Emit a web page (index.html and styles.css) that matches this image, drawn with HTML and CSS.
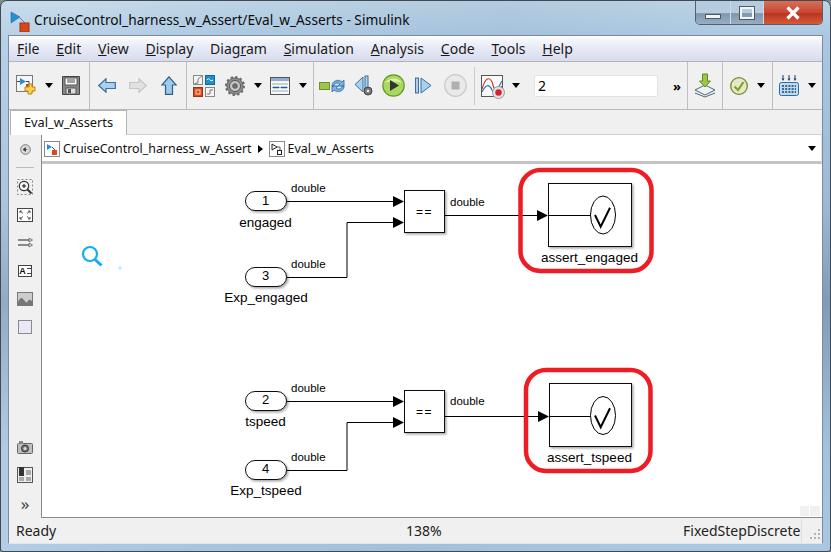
FILE: index.html
```html
<!DOCTYPE html>
<html lang="en">
<head>
<meta charset="utf-8">
<title>CruiseControl_harness_w_Assert/Eval_w_Asserts - Simulink</title>
<link rel="stylesheet" href="styles.css">
</head>
<body>
<div class="window">
  <header class="titlebar">
    <svg class="app-icon" width="22" height="24" viewBox="0 0 22 24"><path d="M1 4l9 5-9 6z" fill="#2a8fd0" stroke="#1a6aa8" stroke-width=".6"/><path d="M10 10l6 6" stroke="#777" fill="none"/><rect x="10" y="15" width="9" height="9" fill="#d8481e" stroke="#a03010"/></svg>
    <span class="title">CruiseControl_harness_w_Assert/Eval_w_Asserts - Simulink</span>
    <div class="caption">
      <span class="cap cap-min"><i class="min-glyph"></i></span>
      <span class="cap cap-max"><i class="max-glyph"></i></span>
      <span class="cap cap-close"><svg width="16" height="14" viewBox="0 0 16 14"><path d="M2.5 1.5l11 11M13.5 1.5l-11 11" stroke="#fff" stroke-width="3.2" fill="none"/></svg></span>
    </div>
  </header>
  <div class="frame">
    <nav class="menubar">
      <span><u>F</u>ile</span><span><u>E</u>dit</span><span><u>V</u>iew</span><span><u>D</u>isplay</span><span>Diag<u>r</u>am</span><span><u>S</u>imulation</span><span><u>A</u>nalysis</span><span><u>C</u>ode</span><span><u>T</u>ools</span><span><u>H</u>elp</span>
    </nav>
    <div class="toolbar">
      <div class="group g1">
        <svg class="t-new" width="21" height="21" viewBox="0 0 21 21"><rect x=".5" y=".5" width="16" height="16" fill="#f6f6f6" stroke="#777"/><path d="M4 3l6 3.5-6 3.5z" fill="#2a8fd0"/><path d="M1 6.500h3M10 6.500h3v3" stroke="#444" fill="none"/><rect x="10" y="9" width="3" height="3" fill="#d8481e"/><path d="M13 9h3v3h3v4h-3v3h-4v-3H9v-4h4z" fill="#f8d34a" stroke="#b68a18"/></svg>
        <i class="dd dd-new"></i>
        <svg class="t-save" width="18" height="19" viewBox="0 0 18 19"><path d="M.5.5h17v18H.5z" fill="#888" stroke="#444"/><rect x="3" y="2" width="12" height="7" fill="#fff" stroke="#555"/><path d="M5 4h8M5 6h8" stroke="#444"/><rect x="4" y="12" width="10" height="6" fill="#ddd" stroke="#555"/><rect x="6" y="13" width="3" height="4" fill="#555"/></svg>
      </div>
      <div class="group g2">
        <svg class="t-back" width="18" height="15" viewBox="0 0 18 15"><path d="M.7 7.500L8 .8v3.700h9.300v6H8v3.700z" fill="#a9d0ee" stroke="#3c6f9d" stroke-width="1.200"/></svg>
        <svg class="t-fwd" width="18" height="15" viewBox="0 0 18 15"><path d="M17.300 7.500L10 .8v3.700H.7v6H10v3.700z" fill="#e2e2e2" stroke="#c6c6c6" stroke-width="1.200"/></svg>
        <svg class="t-up" width="16" height="19" viewBox="0 0 16 19"><path d="M8 .8L15.300 9H11.500v9.300h-7V9H.7z" fill="#9cc9ec" stroke="#2f5e88" stroke-width="1.200"/></svg>
      </div>
      <div class="group g3">
        <svg class="t-lib" width="22" height="22" viewBox="0 0 22 22"><rect x=".5" y=".5" width="9" height="9" fill="#f3f3f3" stroke="#888"/><path d="M1 9l4-1V4l4-3" stroke="#888" fill="#d4d4d4"/><rect x="12.500" y=".5" width="9" height="9" fill="#1f8fd0" stroke="#136a9e"/><path d="M14 5c2-4 3 3 6 0" stroke="#fff" fill="none"/><rect x=".5" y="12.500" width="9" height="9" fill="#d8481e" stroke="#a03010"/><rect x="3" y="15" width="4" height="4" fill="none" stroke="#fbd0b0"/><rect x="12.500" y="12.500" width="9" height="9" fill="#f3f3f3" stroke="#888"/><path d="M14 19h3v-4h3" stroke="#777" fill="none"/></svg>
        <svg class="t-gear" width="20" height="20" viewBox="0 0 20 20"><circle cx="10" cy="10" r="8.200" fill="#8d8d8d" stroke="#666" stroke-width="1"/><circle cx="10" cy="10" r="9" fill="none" stroke="#6b6b6b" stroke-width="2" stroke-dasharray="2.400 2.300"/><circle cx="10" cy="10" r="5.500" fill="#c8c8c8" stroke="#555"/><circle cx="10" cy="10" r="2.800" fill="#6a6a6a"/></svg>
        <i class="dd dd-gear"></i>
        <svg class="t-param" width="20" height="18" viewBox="0 0 20 18"><rect x=".5" y=".5" width="19" height="17" fill="#f7f7f7" stroke="#555"/><rect x="1" y="1" width="18" height="3" fill="#8ab0d4"/><path d="M2 7h16M2 10.500h16M2 14h16" stroke="#9aa9b8"/><path d="M3 10.500h6M11 10.500h6" stroke="#1c5f9c" stroke-width="1.500"/></svg>
        <i class="dd dd-param"></i>
      </div>
      <div class="group g4">
        <svg class="t-refresh" width="27" height="18" viewBox="0 0 27 18"><rect x=".5" y="5.500" width="10" height="7" fill="#9ec64a" stroke="#6e8f2c"/><circle cx="19" cy="9" r="7" fill="#cfe3f4"/><path d="M13 9c0-5 6-7 10-4l2-2v6h-6l2-2c-3-2-6-1-6 2zM25 9c0 5-6 7-10 4l-2 2V9h6l-2 2c3 2 6 1 6-2z" fill="#7fb2dc" stroke="#2f6c9f" stroke-width=".8"/></svg>
        <svg class="t-stepb" width="19" height="21" viewBox="0 0 19 21"><path d="M9 2L1 9.500l8 7.500z" fill="#a9d0ee" stroke="#3c6f9d"/><rect x="11" y="1" width="3" height="14" fill="#a9d0ee" stroke="#3c6f9d"/><circle cx="14" cy="16" r="4" fill="#777" stroke="#444"/><circle cx="14" cy="16" r="1.300" fill="#eee"/></svg>
        <svg class="t-play" width="23" height="23" viewBox="0 0 23 23"><circle cx="11.500" cy="11.500" r="10.700" fill="#a8d85c" stroke="#5e9a2a" stroke-width="1.200"/><path d="M3 9c3-6 14-6 17 0-5-2-12-2-17 0z" fill="#d9f0ad"/><path d="M8 6l9 5.500L8 17z" fill="#333"/></svg>
        <svg class="t-stepf" width="18" height="17" viewBox="0 0 18 17"><rect x=".5" y="1" width="3" height="15" fill="#a9d0ee" stroke="#3c6f9d"/><path d="M6 1l10 7.500L6 16z" fill="#a9d0ee" stroke="#3c6f9d"/></svg>
        <svg class="t-stop" width="23" height="23" viewBox="0 0 23 23"><circle cx="11.500" cy="11.500" r="10.800" fill="#e9e9e9" stroke="#c9c9c9" stroke-width="1.200"/><rect x="7.500" y="7.500" width="8" height="8" fill="#b0b0b0"/></svg>
        <b class="vsep"></b>
        <svg class="t-scope" width="24" height="24" viewBox="0 0 24 24"><rect x=".5" y=".5" width="21" height="21" fill="#fbfbfb" stroke="#555"/><path d="M1 14c4-14 9-12 11-4s6 8 9 1" stroke="#c63a2a" fill="none" stroke-width="1.200"/><path d="M1 17c4-8 7-8 10-2s6-2 10-9" stroke="#2a6fb8" fill="none" stroke-width="1.200"/><circle cx="17.500" cy="17.500" r="6" fill="#e2e2e2" stroke="#999"/><circle cx="17.500" cy="17.500" r="3.200" fill="#d8202c"/></svg>
        <i class="dd dd-scope"></i>
        <input class="stoptime" type="text" value="2" aria-label="Simulation stop time">
        <span class="more">&raquo;</span>
      </div>
      <div class="group g5">
        <svg width="22" height="25" viewBox="0 0 22 25"><path d="M1 17l10-5 10 5-10 5z" fill="#eef3f5" stroke="#4d6b7a"/><path d="M1 20l10 4 10-4" fill="none" stroke="#4d6b7a"/><path d="M8.500 1h5v7h3l-5.500 6-5.500-6h3z" fill="#9ec64a" stroke="#5e8a20"/></svg>
      </div>
      <div class="group g6">
        <svg width="18" height="18" viewBox="0 0 18 18"><circle cx="9" cy="9" r="8.300" fill="#e8e8c8" stroke="#6f8a30" stroke-width="1.300"/><path d="M4.500 9.500l3.500 3.500 5.500-8" fill="none" stroke="#7aa52c" stroke-width="2.200"/></svg>
        <i class="dd dd-check"></i>
      </div>
      <div class="group g7">
        <svg width="20" height="21" viewBox="0 0 20 21"><rect x=".5" y="7.500" width="19" height="13" rx="2" fill="#bcdcf4" stroke="#2a6ea8"/><path d="M3 11h14M3 14h14M3 17h14" stroke="#1c3f66" stroke-width="1.500" stroke-dasharray="2 1.200"/><path d="M4 0v4M10 0v4M16 0v4" stroke="#1c3f66"/><path d="M2.500 3.500h3L4 6zM8.500 3.500h3L10 6zM14.500 3.500h3L16 6z" fill="#1c3f66"/></svg>
        <i class="dd dd-sim"></i>
      </div>
    </div>
    <div class="tabrow"><span class="tab">Eval_w_Asserts</span></div>
    <div class="workspace">
      <aside class="sidebar">
        <svg class="s-nav" width="11" height="11" viewBox="0 0 11 11"><circle cx="5.500" cy="5.500" r="4.800" fill="#ddd" stroke="#777"/><path d="M7.500 5.500H5M5.500 3.500L3 5.500l2.500 2z" fill="#333" stroke="#333" stroke-width=".6"/></svg>
        <hr class="s-rule">
        <div class="s-slot"><svg width="16" height="16" viewBox="0 0 16 16"><rect x=".5" y=".5" width="15" height="15" fill="none" stroke="#888" stroke-dasharray="2 2"/><circle cx="7" cy="7" r="4.700" fill="#f4f4f4" stroke="#333" stroke-width="1.200"/><path d="M5 7h4M7 5v4" stroke="#111"/><path d="M10.500 10.500l4 4" stroke="#333" stroke-width="2"/></svg></div>
        <div class="s-slot"><svg width="16" height="14" viewBox="0 0 16 14"><rect x=".5" y=".5" width="15" height="13" fill="#fff" stroke="#444"/><path d="M3 5V3h2M13 5V3h-2M3 9v2h2M13 9v2h-2M3 3l3 2.500M13 3l-3 2.500M3 11l3-2.500M13 11l-3-2.500" stroke="#555" fill="none"/></svg></div>
        <div class="s-slot"><svg width="15" height="10" viewBox="0 0 15 10"><path d="M0 2h13M0 7h13" stroke="#222" stroke-width="1.100"/><path d="M11 0l3.500 2-3.500 2zM11 5l3.500 2-3.500 2z" fill="#ddd" stroke="#555" stroke-width=".7"/></svg></div>
        <div class="s-slot"><span class="note-icon"><b>A</b><i></i></span></div>
        <div class="s-slot"><svg width="16" height="14" viewBox="0 0 16 14"><rect x=".5" y=".5" width="15" height="13" fill="#ccc" stroke="#777"/><path d="M1 10c2-5 4-5 6-2s3 3 4 1 2-1 4 0v4H1z" fill="#777"/></svg></div>
        <div class="s-slot"><span class="area-icon"></span></div>
        <span class="s-spacer"></span>
        <div class="s-slot"><svg width="16" height="13" viewBox="0 0 16 13"><rect x=".5" y="2.500" width="15" height="10" rx="1" fill="#bdbdbd" stroke="#666"/><rect x="2" y="0" width="4" height="3" fill="#888"/><circle cx="8" cy="7.500" r="3.500" fill="#777" stroke="#333"/><circle cx="8" cy="7.500" r="1.500" fill="#ddd"/></svg></div>
        <div class="s-slot"><svg width="16" height="16" viewBox="0 0 16 16"><rect x=".5" y=".5" width="15" height="15" fill="#eee" stroke="#555"/><rect x="2" y="0" width="5" height="9" fill="#333"/><rect x="9" y="3" width="5" height="5" fill="#aaa"/><rect x="2" y="10" width="5" height="4" fill="#aaa"/><rect x="9" y="10" width="5" height="4" fill="#aaa"/></svg></div>
        <div class="s-slot s-more">&raquo;</div>
      </aside>
      <div class="editor">
        <div class="crumbs">
          <svg width="16" height="16" viewBox="0 0 16 16"><rect x=".5" y=".5" width="15" height="15" fill="#fff" stroke="#8a8a8a"/><path d="M3 3l5 3-5 3z" fill="#2a8fd0"/><path d="M8 6l3 3" stroke="#555"/><rect x="8" y="9" width="5" height="5" fill="#d8481e"/></svg>
          <span>CruiseControl_harness_w_Assert</span>
          <i class="crumb-sep"></i>
          <svg width="16" height="16" viewBox="0 0 16 16"><rect x=".5" y=".5" width="15" height="15" fill="#fff" stroke="#8a8a8a"/><path d="M3 3l5 3-5 3z" fill="#fff" stroke="#222"/><path d="M8 6h3v3" stroke="#555" fill="none"/><rect x="8.500" y="9.500" width="4" height="4" fill="#fff" stroke="#222"/></svg>
          <span>Eval_w_Asserts</span>
          <i class="dd dd-crumb"></i>
        </div>
        <div class="canvas">
          <svg class="diagram" width="780" height="353" viewBox="42 164 780 353">
            <defs>
              <filter id="sh" x="-10%" y="-10%" width="125%" height="125%"><feDropShadow dx="1.500" dy="1.500" stdDeviation="1.200" flood-color="#000" flood-opacity=".35"/></filter>
            </defs>
            <g class="find">
              <circle cx="90" cy="254" r="7" /><path d="M95 259.500l6.500 6"/>
            </g>
            <path d="M120 265l1 2 2 1-2 1-1 2-1-2-2-1 2-1z" fill="#cfeafc"/>
            <rect x="800" y="506" width="9" height="10" fill="#f0f0f0"/><rect x="810" y="506" width="10" height="10" fill="#f0f0f0"/>

            <path class="wire" d="M287 201.500H394M287 277.500H347V222.500H394M445 215.500H539"/>
            <path class="wire" d="M287 401.500H394M287 470.500H347V422.500H394M445 416.500H540"/>
            <path class="head" d="M393 196l11 5.500-11 5.500zM393 217l11 5.500-11 5.500zM537 210l11 5.500-11 5.500zM393 396l11 5.500-11 5.500zM393 417l11 5.500-11 5.500zM538 411l11 5.500-11 5.500z"/>

            <g class="blocks">
              <rect x="245.500" y="191.500" width="41" height="19" rx="9.500"/>
              <rect x="245.500" y="267.500" width="41" height="19" rx="9.500"/>
              <rect x="245.500" y="391.500" width="41" height="19" rx="9.500"/>
              <rect x="245.500" y="460.500" width="41" height="19" rx="9.500"/>
              <rect x="404.500" y="190.500" width="40" height="42"/>
              <rect x="404.500" y="390.500" width="40" height="42"/>
              <rect x="548.500" y="183.500" width="83" height="63"/>
              <rect x="549.500" y="383.500" width="82" height="63"/>
            </g>
            <path class="wire" d="M548 215.500H590M549 416.500H590"/>
            <ellipse class="scope" cx="603" cy="215" rx="12.500" ry="19"/>
            <ellipse class="scope" cx="603" cy="415.500" rx="12.500" ry="19"/>
            <path class="tick" d="M595 215l5.700 11.700 9.300-19M595 415.500l5.700 11.700 9.300-19"/>

            <rect class="mark" x="520.500" y="170" width="131" height="101" rx="20"/>
            <rect class="mark" x="526" y="370" width="124.500" height="101" rx="20"/>

            <g class="num">
              <text x="265.500" y="205">1</text><text x="265.500" y="280">3</text><text x="265.500" y="404">2</text><text x="265.500" y="473">4</text>
            </g>
            <g class="sig">
              <text x="291" y="192">double</text><text x="291" y="268">double</text><text x="450" y="206">double</text>
              <text x="291" y="392">double</text><text x="291" y="461">double</text><text x="450" y="405">double</text>
            </g>
            <g class="eq"><text x="424.500" y="216">==</text><text x="424.500" y="416">==</text></g>
            <g class="lbl">
              <text x="265.500" y="227">engaged</text><text x="266" y="302">Exp_engaged</text>
              <text x="589.500" y="262">assert_engaged</text>
              <text x="265.500" y="426">tspeed</text><text x="266" y="495">Exp_tspeed</text>
              <text x="589.500" y="462">assert_tspeed</text>
            </g>
          </svg>
        </div>
      </div>
    </div>
    <footer class="status">
      <span class="st-ready">Ready</span>
      <span class="st-zoom">138%</span>
      <span class="st-solver">FixedStepDiscrete</span>
      <svg class="grip" width="12" height="12" viewBox="0 0 12 12"><path d="M9 0h2v2H9zM5 4h2v2H5zM9 4h2v2H9zM1 8h2v2H1zM5 8h2v2H5zM9 8h2v2H9z" fill="#b4b4b4"/></svg>
    </footer>
  </div>
</div>
</body>
</html>
```
FILE: styles.css
```css
* { box-sizing: border-box; }
html, body { margin: 0; padding: 0; background: #7d8a94; }
body { width: 831px; height: 552px; overflow: hidden; font-family: "Noto Sans", "Open Sans", sans-serif; color: #111; }

.window {
  width: 831px; height: 552px; display: flex; flex-direction: column;
  padding: 0 7px 7px 7px; border: 1px solid #3f4a52; border-radius: 7px 7px 3px 3px;
  background:
    linear-gradient(100deg, rgba(255,255,255,.16) 0 8%, transparent 25%, rgba(120,150,180,.14) 55%, transparent 80%),
    linear-gradient(180deg, #bdd4e6 0, #a9c7e2 40px, #9db9d6 200px, #7f9bb7 300px, #a4c1de 450px, #a9c6e2 552px);
}

.titlebar { height: 34px; flex: none; display: flex; align-items: flex-start; }
.app-icon { margin: 7px 0 0 2px; flex: none; }
.title { margin: 8px 0 0 2px; font-size: 13.700px; line-height: 22px; white-space: nowrap; color: #0c0c0c; }
.caption { margin-left: auto; height: 24px; display: flex; border: 1px solid #55606b; border-top: 0; border-radius: 0 0 5px 5px; overflow: hidden; }
.cap { display: flex; align-items: center; justify-content: center; height: 100%; border-right: 1px solid #d0dbe6; }
.cap-min { width: 35px; background: linear-gradient(#b5cce0, #b5cce0 50%, #7f96ad 55%, #97aec5); align-items: flex-end; padding-bottom: 5px; }
.cap-max { width: 33px; background: linear-gradient(#b5cce0, #b5cce0 50%, #7f96ad 55%, #97aec5); }
.cap-close { width: 58px; border-right: 0; background: linear-gradient(#d8705c, #c8452e 50%, #b8361f 55%, #d8583a); }
.min-glyph { display: block; width: 16px; height: 5px; background: #f2f5f8; border: 1px solid #4d5a66; }
.max-glyph { display: block; width: 14px; height: 12px; border: 2px solid #f2f5f8; outline: 1px solid #4d5a66; outline-offset: 0; margin-top: 1px; }

.frame { flex: 1; min-height: 0; display: flex; flex-direction: column; background: #f0f0f0; border: 1px solid #7d8b99; border-bottom-color: #dfe6ee; }

.menubar { height: 26px; flex: none; display: flex; gap: 16.800px; align-items: center; padding: 0 0 0 8px; font-size: 14px; background: linear-gradient(#fcfcfe 0, #e8ebf6 45%, #d7dcee 100%); border-bottom: 1px solid #b4b4b4; color: #1a1a1a; }
.menubar span { line-height: 20px; }

.toolbar { height: 48px; flex: none; display: flex; background: #f0f0f0; border-bottom: 1px solid #b9b9b9; }
.group { height: 100%; display: flex; align-items: center; border-right: 1px solid #bfbfbf; flex: none; }
.g1 { width: 81px; }
.g2 { width: 97px; }
.g3 { width: 127px; }
.g4 { width: 374px; }
.g5 { width: 35px; padding-left: 6px; }
.g6 { width: 50px; padding-left: 7px; }
.g7 { width: 49px; border-right: 0; padding-left: 6px; }

.dd { display: block; width: 0; height: 0; border-left: 4.500px solid transparent; border-right: 4.500px solid transparent; border-top: 5px solid #000; flex: none; }

.t-new { margin-left: 7px; }
.dd-new { margin-left: 8px; }
.t-save { margin-left: 9px; }
.t-back { margin-left: 8px; }
.t-fwd { margin-left: 13px; }
.t-up { margin-left: 14px; }
.t-lib { margin-left: 6px; }
.t-gear { margin-left: 10px; }
.dd-gear { margin-left: 9px; }
.t-param { margin-left: 8px; }
.dd-param { margin-left: 9px; }
.t-refresh { margin-left: 5px; }
.t-stepb { margin-left: 8px; }
.t-play { margin-left: 9px; }
.t-stepf { margin-left: 10px; }
.t-stop { margin-left: 11px; }
.vsep { width: 1px; height: 38px; background: #c9c9c9; margin-left: 7px; flex: none; }
.t-scope { margin-left: 6px; margin-top: 2px; }
.dd-scope { margin-left: 7px; }
.stoptime { width: 124px; height: 22px; margin-left: 14px; border: 1px solid #dde3ea; border-radius: 2px; background: #fff; padding: 0 3px; font: 14px "Noto Sans", sans-serif; color: #000; outline: none; }
.more { margin-left: 15px; font-size: 13px; font-weight: 700; line-height: 16px; color: #000; }
.dd-check { margin-left: 9px; }
.dd-sim { margin-left: 9px; }

.tabrow { height: 24px; flex: none; display: flex; padding-left: 1px; background: #f0f0f0; }
.tab { width: 117px; height: 25px; background: #fff; border: 1px solid #b4b4b4; border-bottom: 0; font-size: 12.800px; line-height: 23px; text-align: center; position: relative; z-index: 1; }

.workspace { flex: 1; min-height: 0; display: flex; }
.sidebar { width: 33px; flex: none; display: flex; flex-direction: column; align-items: center; padding: 10px 0 1px; border-right: 1px solid #8a8a8a; }
.s-nav { flex: none; }
.s-rule { width: 18px; height: 1px; margin: 12px 0 5px; border: 0; background: #bbb; flex: none; }
.s-slot { height: 28px; width: 100%; flex: none; display: flex; align-items: center; justify-content: center; }
.note-icon { width: 14px; height: 12px; border: 1px solid #444; background: #fff; display: flex; align-items: center; justify-content: center; gap: 1px; }
.note-icon b { font: 700 9px/10px "Liberation Sans", sans-serif; }
.note-icon i { display: block; width: 4px; height: 6px; border-top: 1px solid #444; border-bottom: 1px solid #444; }
.area-icon { display: block; width: 14px; height: 14px; background: #e8e8f8; border: 1px solid #8a8a8a; }
.s-spacer { flex: 1; }
.s-more { font-size: 17px; color: #444; }

.editor { flex: 1; min-width: 0; display: flex; flex-direction: column; }
.crumbs { height: 30px; flex: none; display: flex; align-items: center; gap: 3px; padding: 1px 5px 0 2px; font-size: 12.400px; background: #fff; border: 2px solid #f0f0f0; border-top: 1px solid #d0d0d0; border-bottom: 3px solid #c4c4c4; border-left: 0; border-right: 1px solid #e6e6e6; }
.crumb-sep { display: block; width: 0; height: 0; border-top: 4.500px solid transparent; border-bottom: 4.500px solid transparent; border-left: 5px solid #000; margin: 0 3px; }
.dd-crumb { margin-left: auto; }

.canvas { flex: 1; min-height: 0; background: #fff; border-bottom: 1px solid #8a8a8a; overflow: hidden; }
.diagram { display: block; }
.find { fill: none; stroke: #12aef0; stroke-width: 2.200; }
.find path { stroke-width: 3; }
.wire { fill: none; stroke: #000; stroke-width: 1; }
.head { fill: #000; }
.blocks rect { fill: #fff; stroke: #111; stroke-width: 1; filter: url(#sh); }
.scope { fill: #fff; stroke: #000; stroke-width: 1; }
.tick { fill: none; stroke: #000; stroke-width: 2; }
.mark { fill: none; stroke: #ee1c25; stroke-width: 4.500; }
.num text, .eq text, .lbl text { text-anchor: middle; }
.num { font: 13px "Liberation Sans", sans-serif; }
.sig { font: 11.500px "Liberation Sans", sans-serif; }
.eq { font: 12px "Liberation Sans", sans-serif; letter-spacing: 1.500px; }
.lbl { font: 13.500px "Liberation Sans", sans-serif; }

.status { height: 25px; flex: none; display: flex; align-items: center; font-size: 14px; color: #222; padding-left: 7px; }
.st-ready { width: 390px; }
.st-zoom { width: 277px; }
.st-solver { width: 119px; border-right: 1px solid #ddd; height: 24px; line-height: 24px; white-space: nowrap; }
.grip { margin: 9px 0 0 7px; flex: none; }
```
